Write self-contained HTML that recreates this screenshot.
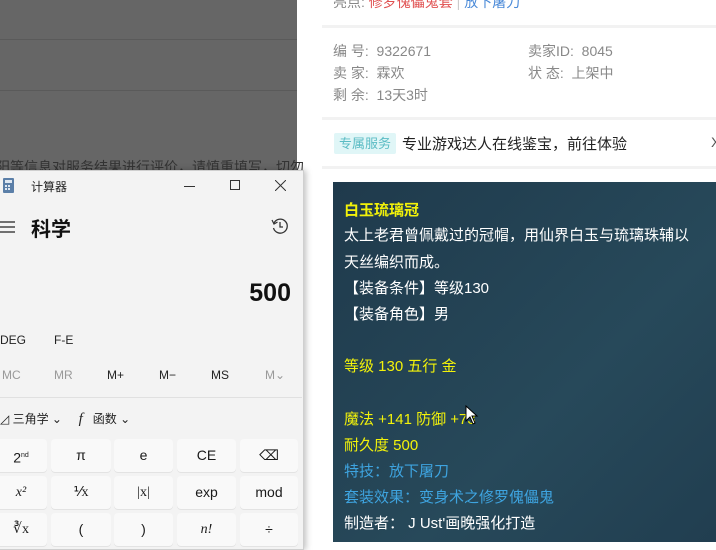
<!DOCTYPE html>
<html><head><meta charset="utf-8"><style>
*{margin:0;padding:0;box-sizing:border-box}
body{width:716px;height:542px;overflow:hidden;position:relative;background:#fff;font-family:"Liberation Sans","Noto Sans CJK SC",sans-serif}
.a{position:absolute;white-space:nowrap}
.g{color:#888;font-size:14px}
.btn{position:absolute;background:#f9f9f9;border-radius:4px;box-shadow:0 1px 0 #e3e3e3;text-align:center;font-size:14px;color:#1a1a1a;height:33px;line-height:33px}
.c{color:#fff;font-size:15px}
.y{color:#f2f20a}
.b{color:#3ea4e0}
</style></head><body>
<div class="a" style="left:0;top:0;width:297px;height:542px;background:#666"></div>
<div class="a" style="left:0;top:39px;width:297px;height:1px;background:#5a5a5a"></div>
<div class="a" style="left:0;top:90px;width:297px;height:1px;background:#5a5a5a"></div>
<div class="a" style="left:-4px;top:157px;color:#333;font-size:14px">阳等信息对服务结果进行评价，请慎重填写，切勿</div>

<div class="a g" style="left:333px;top:-8px">亮点: <span style="color:#e05050">修罗傀儡鬼套</span> <span style="color:#ccc">|</span> <span style="color:#4a8ad8">放下屠刀</span></div>
<div class="a" style="left:322px;top:25px;width:394px;height:3px;background:#f2f2f2"></div>
<div class="a g" style="left:333px;top:41px">编 号:&nbsp; 9322671</div>
<div class="a g" style="left:528px;top:41px">卖家ID:&nbsp; 8045</div>
<div class="a g" style="left:333px;top:63px">卖 家:&nbsp; 霖欢</div>
<div class="a g" style="left:528px;top:63px">状 态:&nbsp; 上架中</div>
<div class="a g" style="left:333px;top:85px">剩 余:&nbsp; 13天3时</div>
<div class="a" style="left:322px;top:117px;width:394px;height:3px;background:#f2f2f2"></div>
<div class="a" style="left:334px;top:133px;width:62px;height:21px;background:#e0f6f7;color:#5bbcc4;font-size:13px;line-height:21px;text-align:center;border-radius:2px">专属服务</div>
<div class="a" style="left:402px;top:133px;color:#222;font-size:15px">专业游戏达人在线鉴宝，前往体验</div>
<div class="a" style="left:711px;top:134px;color:#555;font-size:14px">X</div>
<div class="a" style="left:322px;top:166px;width:394px;height:3px;background:#f2f2f2"></div>

<div class="a" style="left:333px;top:182px;width:383px;height:360px;background:linear-gradient(135deg,#1f3a4c,#27495a 60%,#213e50)"></div>
<div class="a c y" style="left:344px;top:199px;font-weight:bold">白玉琉璃冠</div>
<div class="a c" style="left:344px;top:224px">太上老君曾佩戴过的冠帽，用仙界白玉与琉璃珠辅以</div>
<div class="a c" style="left:344px;top:251px">天丝编织而成。</div>
<div class="a c" style="left:344px;top:277px">【装备条件】等级130</div>
<div class="a c" style="left:344px;top:303px">【装备角色】男</div>
<div class="a c y" style="left:344px;top:355px">等级 130 五行 金</div>
<div class="a c y" style="left:344px;top:408px">魔法 +141 防御 +73</div>
<div class="a c y" style="left:344px;top:434px">耐久度 500</div>
<div class="a c b" style="left:344px;top:460px">特技：放下屠刀</div>
<div class="a c b" style="left:344px;top:486px">套装效果：变身术之修罗傀儡鬼</div>
<div class="a c" style="left:344px;top:512px">制造者： J Ust'画晚强化打造</div>
<svg class="a" style="left:465px;top:405px" width="14" height="20"><path d="M1 1 L1 16 L5 12 L8 19 L10 18 L7 11 L12 11 Z" fill="#fff" stroke="#000"/></svg>

<div class="a" style="left:-2px;top:170px;width:306px;height:380px;background:#f3f3f3;border:1px solid #cfcfcf;box-shadow:2px 0 6px rgba(0,0,0,.25)"></div>
<svg class="a" style="left:3px;top:178px" width="11" height="15"><rect x="0" y="0" width="11" height="15" rx="1" fill="#5b7fa8"/><rect x="2" y="2" width="7" height="3" fill="#dfe8f2"/><g fill="#dfe8f2"><rect x="2" y="7" width="2" height="2"/><rect x="5" y="7" width="2" height="2"/><rect x="2" y="10" width="2" height="2"/><rect x="5" y="10" width="2" height="2"/></g></svg>
<div class="a" style="left:31px;top:178px;font-size:12px;color:#222">计算器</div>
<div class="a" style="left:184px;top:186px;width:11px;height:1px;background:#333"></div>
<div class="a" style="left:230px;top:180px;width:10px;height:10px;border:1px solid #333"></div>
<svg class="a" style="left:275px;top:180px" width="11" height="11"><path d="M0 0L11 11M11 0L0 11" stroke="#333"/></svg>
<svg class="a" style="left:0;top:221px" width="15" height="12"><path d="M0 1H15M0 6H15M0 11H15" stroke="#222" stroke-width="1.2"/></svg>
<div class="a" style="left:31px;top:213px;font-size:20px;font-weight:bold;color:#111">科学</div>
<svg class="a" style="left:271px;top:217px" width="18" height="18"><path d="M3 6A7 7 0 1 1 2.5 11" fill="none" stroke="#333" stroke-width="1.3"/><path d="M1 3L3 7L6.5 5" fill="none" stroke="#333" stroke-width="1.2"/><path d="M9 5V10H12" fill="none" stroke="#333" stroke-width="1.3"/></svg>
<div class="a" style="right:425px;top:279px;font-size:25px;font-weight:bold;color:#111">500</div>
<div class="a" style="left:0;top:333px;font-size:12px;color:#222">DEG</div>
<div class="a" style="left:54px;top:333px;font-size:12px;color:#222">F-E</div>
<div class="a" style="left:2px;top:368px;font-size:12px;color:#999">MC</div>
<div class="a" style="left:54px;top:368px;font-size:12px;color:#999">MR</div>
<div class="a" style="left:107px;top:368px;font-size:12px;color:#222">M+</div>
<div class="a" style="left:159px;top:368px;font-size:12px;color:#222">M−</div>
<div class="a" style="left:211px;top:368px;font-size:12px;color:#222">MS</div>
<div class="a" style="left:265px;top:368px;font-size:12px;color:#999">M⌄</div>
<div class="a" style="left:0;top:397px;width:302px;height:1px;background:#e0e0e0"></div>
<div class="a" style="left:0;top:410px;font-size:12px;color:#222">◿ 三角学 ⌄&nbsp;&nbsp;&nbsp;&nbsp; <i style="font-family:'Liberation Serif';font-size:15px">f</i>&nbsp;&nbsp; 函数 ⌄</div>

<div class="btn" style="left:-5px;top:439px;width:52px">2<sup style="font-size:7px">nd</sup></div>
<div class="btn" style="left:51px;top:439px;width:60px">π</div>
<div class="btn" style="left:114px;top:439px;width:59px">e</div>
<div class="btn" style="left:177px;top:439px;width:59px">CE</div>
<div class="btn" style="left:240px;top:439px;width:58px">⌫</div>
<div class="btn" style="left:-5px;top:476px;width:52px;font-family:'Liberation Serif';font-style:italic">x²</div>
<div class="btn" style="left:51px;top:476px;width:60px;font-family:'Liberation Serif'">⅟x</div>
<div class="btn" style="left:114px;top:476px;width:59px;font-family:'Liberation Serif'">|x|</div>
<div class="btn" style="left:177px;top:476px;width:59px">exp</div>
<div class="btn" style="left:240px;top:476px;width:58px">mod</div>
<div class="btn" style="left:-5px;top:513px;width:52px;font-family:'Liberation Serif'">∛x</div>
<div class="btn" style="left:51px;top:513px;width:60px">(</div>
<div class="btn" style="left:114px;top:513px;width:59px">)</div>
<div class="btn" style="left:177px;top:513px;width:59px;font-family:'Liberation Serif';font-style:italic">n!</div>
<div class="btn" style="left:240px;top:513px;width:58px">÷</div>
</body></html>
